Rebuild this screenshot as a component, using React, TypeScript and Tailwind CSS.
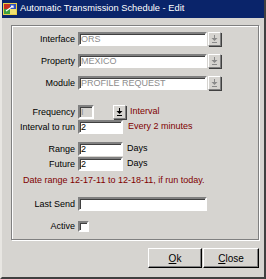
import React from 'react';

const sunken =
    "border-2 border-t-[#808080] border-l-[#808080] border-b-white border-r-white shadow-[inset_1px_1px_0_#404040]";

const DropArrow: React.FC<{ disabled?: boolean }> = ({ disabled }) => (
    <svg width="7" height="8" viewBox="0 0 7 8">
        <rect x="3" y="0" width="1" height="3" fill={disabled ? "#8a8a8a" : "#000"} />
        <polygon points="0.5,3 6.5,3 3.5,6" fill={disabled ? "#8a8a8a" : "#000"} />
        <rect x="1" y="7" width="5" height="1" fill={disabled ? "#8a8a8a" : "#000"} />
    </svg>
);

const DropButton: React.FC<{ disabled?: boolean }> = ({ disabled }) => (
    <div className="w-[13px] h-[14px] flex items-center justify-center bg-[#d6d4d0] border border-t-white border-l-white border-r-[#808080] border-b-[#808080] shadow-[1px_1px_0_#404040]">
        <DropArrow disabled={disabled} />
    </div>
);

const Label: React.FC<{ text: string }> = ({ text }) => (
    <div className="w-[64px] text-right pr-[3px] leading-[14px]">{text}</div>
);

const Field: React.FC<{ value?: string; width: string; disabled?: boolean; grey?: boolean }> = ({ value, width, disabled, grey }) => (
    <div
        className={`${width} h-[14px] ${sunken} ${grey ? "bg-[#d6d4d0]" : "bg-white"} ${disabled ? "text-[#8c8c8c]" : "text-black"} pl-[1px] leading-[10px] overflow-hidden whitespace-nowrap`}
    >
        {value}
    </div>
);

const WinButton: React.FC<{ first: string; rest: string }> = ({ first, rest }) => (
    <div className="h-[20px] flex items-center justify-center border border-t-white border-l-white border-r-black border-b-black shadow-[inset_-1px_-1px_0_#808080] text-[10px]">
        <span>
            <span className="underline">{first}</span>
            {rest}
        </span>
    </div>
);

const App: React.FC = () => {
    return (
        <div
            className="w-[266px] h-[279px] bg-[#d6d4d0] border-l-2 border-l-[#e8e6e2] border-r-2 border-r-[#404040] border-b-2 border-b-[#404040] flex flex-col text-[9px] text-black"
            style={{ fontFamily: '"Liberation Sans", Arial, sans-serif' }}
        >
            {/* title bar */}
            <div className="h-[18px] bg-[#0a246a] flex items-center pl-[1px] gap-[3px] text-white text-[9.3px]">
                <svg width="14" height="14" viewBox="0 0 14 14">
                    <rect x="0" y="1" width="14" height="12" fill="#e8d04a" />
                    <rect x="1" y="2" width="6" height="5" fill="#c83020" />
                    <rect x="7" y="2" width="6" height="5" fill="#3050c0" />
                    <rect x="1" y="7" width="6" height="5" fill="#40a040" />
                    <rect x="7" y="7" width="6" height="5" fill="#f0e070" />
                    <path d="M3 9 L10 4 M8 4 L10 4 L10 6" stroke="#fff" strokeWidth="1.2" fill="none" />
                </svg>
                <span>Automatic Transmission Schedule - Edit</span>
            </div>

            {/* group box */}
            <div className="mt-[7px] ml-[9px] w-[248px] h-[215px] border border-[#808080] shadow-[inset_1px_1px_0_white,1px_1px_0_white] flex flex-col pt-[6px] pl-[2px]">
                <div className="flex items-center">
                    <Label text="Interface" />
                    <Field value="ORS" width="w-[129px]" disabled />
                    <div className="ml-[1px]"><DropButton disabled /></div>
                </div>
                <div className="flex items-center mt-[8px]">
                    <Label text="Property" />
                    <Field value="MEXICO" width="w-[129px]" disabled />
                    <div className="ml-[1px]"><DropButton disabled /></div>
                </div>
                <div className="flex items-center mt-[8px]">
                    <Label text="Module" />
                    <Field value="PROFILE REQUEST" width="w-[129px]" disabled />
                    <div className="ml-[1px]"><DropButton disabled /></div>
                </div>

                <div className="flex items-center mt-[15px]">
                    <Label text="Frequency" />
                    <Field value="I" width="w-[16px]" grey disabled />
                    <div className="ml-[19px]"><DropButton /></div>
                    <span className="ml-[4px] text-[#800000]">Interval</span>
                </div>
                <div className="flex items-center mt-[1px]">
                    <Label text="Interval to run" />
                    <Field value="2" width="w-[45px]" />
                    <span className="ml-[5px] text-[#800000]">Every 2 minutes</span>
                </div>

                <div className="flex items-center mt-[8px]">
                    <Label text="Range" />
                    <Field value="2" width="w-[45px]" />
                    <span className="ml-[4px]">Days</span>
                </div>
                <div className="flex items-center mt-[1px]">
                    <Label text="Future" />
                    <Field value="2" width="w-[45px]" />
                    <span className="ml-[4px]">Days</span>
                </div>
                <div className="mt-[3px] ml-[9px] leading-[12px] text-[#800000]">
                    Date range 12-17-11 to 12-18-11, if run today.
                </div>

                <div className="flex items-center mt-[11px]">
                    <Label text="Last Send" />
                    <Field width="w-[129px]" />
                </div>
                <div className="flex items-center mt-[8px]">
                    <Label text="Active" />
                    <div className={`w-[11px] h-[11px] bg-white ${sunken}`} />
                </div>
            </div>

            {/* buttons */}
            <div className="flex justify-end gap-[1px] mt-[8px] mr-[5px]">
                <div className="w-[54px]"><WinButton first="O" rest="k" /></div>
                <div className="w-[56px]"><WinButton first="C" rest="lose" /></div>
            </div>
        </div>
    );
};

export default App;
